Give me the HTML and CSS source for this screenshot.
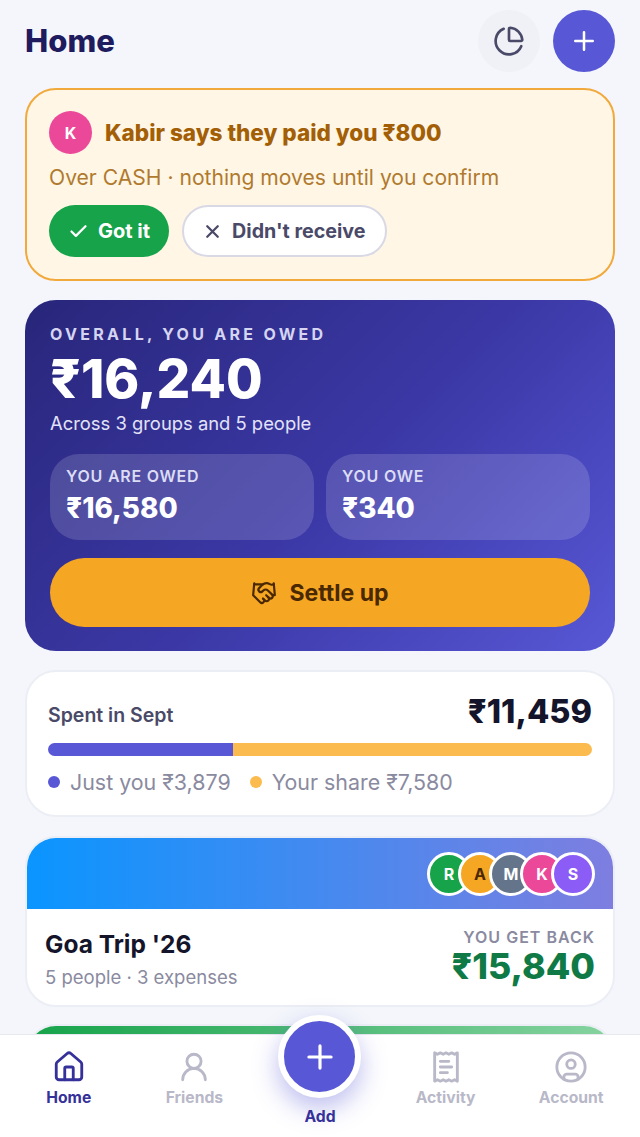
FILE: index.html
```html
<!DOCTYPE html>
<html lang="en">
<head>
    <meta charset="UTF-8">
    <meta name="viewport" content="width=device-width, initial-scale=1.0">
    <title>Home</title>
    <link rel="stylesheet" href="styles.css">
</head>
<body>
    <main class="page">
        <header class="top-bar">
            <h1>Home</h1>
            <div class="top-actions">
                <button class="round-button grey">
                    <svg width="32" height="32" viewBox="0 0 24 24" class="icon"><path d="M21 12c.552 0 1.005-.449.95-.998a10 10 0 0 0-8.953-8.951c-.55-.055-.998.398-.998.95v8a1 1 0 0 0 1 1z"/><path d="M21.21 15.89A10 10 0 1 1 8 2.83"/></svg>
                </button>
                <button class="round-button purple">
                    <svg width="30" height="30" viewBox="0 0 24 24" class="icon"><path d="M5 12h14M12 5v14"/></svg>
                </button>
            </div>
        </header>

        <section class="alert">
            <div class="alert-title">
                <span class="alert-avatar">K</span>
                <strong>Kabir says they paid you ₹800</strong>
            </div>
            <p class="alert-text">Over CASH · nothing moves until you confirm</p>
            <div class="alert-buttons">
                <button class="pill green">
                    <svg width="21" height="21" viewBox="0 0 24 24" class="icon"><path d="M20 6 9 17l-5-5"/></svg>
                    Got it
                </button>
                <button class="pill outline">
                    <svg width="21" height="21" viewBox="0 0 24 24" class="icon"><path d="M18 6 6 18M6 6l12 12"/></svg>
                    Didn't receive
                </button>
            </div>
        </section>

        <section class="hero">
            <div class="hero-label">OVERALL, YOU ARE OWED</div>
            <div class="hero-amount">₹16,240</div>
            <div class="hero-sub">Across 3 groups and 5 people</div>
            <div class="stats">
                <div class="stat">
                    <div class="stat-label">YOU ARE OWED</div>
                    <div class="stat-value">₹16,580</div>
                </div>
                <div class="stat">
                    <div class="stat-label">YOU OWE</div>
                    <div class="stat-value">₹340</div>
                </div>
            </div>
            <button class="settle-button">
                <svg width="26" height="26" viewBox="0 0 24 24" class="icon"><path d="m11 17 2 2a1 1 0 1 0 3-3"/><path d="m14 14 2.5 2.5a1 1 0 1 0 3-3l-3.88-3.88a3 3 0 0 0-4.24 0l-.88.88a1 1 0 1 1-3-3l2.81-2.81a5.79 5.79 0 0 1 7.06-.87l.47.28a2 2 0 0 0 1.42.25L21 4"/><path d="m21 3 1 11h-2"/><path d="M3 3 2 14l6.5 6.5a1 1 0 1 0 3-3"/><path d="M3 4h8"/></svg>
                Settle up
            </button>
        </section>

        <section class="card spent">
            <div class="spent-top">
                <span class="spent-label">Spent in Sept</span>
                <span class="spent-amount">₹11,459</span>
            </div>
            <div class="bar">
                <div class="bar-you"></div>
                <div class="bar-share"></div>
            </div>
            <div class="legend">
                <span class="legend-item"><i class="dot dot-you"></i>Just you ₹3,879</span>
                <span class="legend-item"><i class="dot dot-share"></i>Your share ₹7,580</span>
            </div>
        </section>

        <section class="card group">
            <div class="group-banner blue">
                <div class="avatars">
                    <span class="avatar green-bg">R</span>
                    <span class="avatar amber">A</span>
                    <span class="avatar slate">M</span>
                    <span class="avatar pink">K</span>
                    <span class="avatar violet">S</span>
                </div>
            </div>
            <div class="group-body">
                <div>
                    <div class="group-name">Goa Trip '26</div>
                    <div class="group-meta">5 people · 3 expenses</div>
                </div>
                <div class="group-balance">
                    <div class="balance-label">YOU GET BACK</div>
                    <div class="balance-value">₹15,840</div>
                </div>
            </div>
        </section>

        <section class="card group peek">
            <div class="group-banner green-banner"></div>
        </section>
    </main>

    <nav class="bottom-nav">
        <a class="nav-item active">
            <svg width="34" height="34" viewBox="0 0 24 24" class="icon"><path d="M15 21v-8a1 1 0 0 0-1-1h-4a1 1 0 0 0-1 1v8"/><path d="M3 10a2 2 0 0 1 .709-1.528l7-6a2 2 0 0 1 2.582 0l7 6A2 2 0 0 1 21 10v9a2 2 0 0 1-2 2H5a2 2 0 0 1-2-2z"/></svg>
            Home
        </a>
        <a class="nav-item">
            <svg width="34" height="34" viewBox="0 0 24 24" class="icon"><circle cx="12" cy="8" r="5"/><path d="M20 21a8 8 0 0 0-16 0"/></svg>
            Friends
        </a>
        <a class="nav-item add">
            <span class="add-circle">
                <svg width="38" height="38" viewBox="0 0 24 24" class="icon"><path d="M5 12h14M12 5v14"/></svg>
            </span>
            Add
        </a>
        <a class="nav-item">
            <svg width="34" height="34" viewBox="0 0 24 24" class="icon"><path d="M4 2v20l2-1 2 1 2-1 2 1 2-1 2 1 2-1 2 1V2l-2 1-2-1-2 1-2-1-2 1-2-1-2 1Z"/><path d="M14 8H8M16 12H8M13 16H8"/></svg>
            Activity
        </a>
        <a class="nav-item">
            <svg width="34" height="34" viewBox="0 0 24 24" class="icon"><circle cx="12" cy="12" r="10"/><circle cx="12" cy="10" r="3"/><path d="M7 20.662V19a2 2 0 0 1 2-2h6a2 2 0 0 1 2 2v1.662"/></svg>
            Account
        </a>
    </nav>
</body>
</html>
```

FILE: styles.css
```css
* {
    box-sizing: border-box;
}
html, body {
    margin: 0;
    height: 100%;
    overflow: hidden;
}
body {
    background-color: #f4f6fb;
    color: #14142b;
    font-family: Inter, "Noto Sans", sans-serif;
    position: relative;
}
button {
    font-family: inherit;
    border: none;
    cursor: pointer;
}
.icon {
    fill: none;
    stroke: currentColor;
    stroke-width: 2;
    stroke-linecap: round;
    stroke-linejoin: round;
    flex-shrink: 0;
}
.page {
    padding: 10px 25px 0;
    display: flex;
    flex-direction: column;
    gap: 19px;
}
.top-bar {
    display: flex;
    justify-content: space-between;
    align-items: center;
    margin-bottom: -3px;
}
.top-bar h1 {
    margin: 0 0 2px;
    font-size: 31px;
    font-weight: 800;
    color: #1e1b5e;
}
.top-actions {
    display: flex;
    gap: 13px;
}
.round-button {
    width: 62px;
    height: 62px;
    border-radius: 50%;
    display: flex;
    align-items: center;
    justify-content: center;
    padding: 0;
}
.round-button.grey {
    background: #eff1f6;
    color: #4a4a68;
}
.round-button.purple {
    background: #5858d6;
    color: white;
}
.alert {
    background: #fff6e6;
    border: 2px solid #f2a93b;
    border-radius: 31px;
    padding: 21px 22px 22px;
    height: 193px;
}
.alert-title {
    display: flex;
    align-items: center;
    gap: 13px;
}
.alert-title strong {
    font-size: 22.5px;
    font-weight: 800;
    color: #a35f06;
}
.alert-avatar {
    width: 43px;
    height: 43px;
    border-radius: 50%;
    background: #ec4899;
    color: white;
    display: flex;
    align-items: center;
    justify-content: center;
    font-size: 16px;
    font-weight: 700;
}
.alert-text {
    margin: 11px 0 14px;
    font-size: 21.1px;
    line-height: 26px;
    color: #b07a2e;
}
.alert-buttons {
    display: flex;
    gap: 13px;
}
.pill {
    height: 52px;
    border-radius: 26px;
    display: flex;
    align-items: center;
    gap: 9px;
    font-size: 20px;
    font-weight: 700;
    padding: 0 19px;
}
.pill .icon {
    stroke-width: 2.6;
}
.pill.green {
    background: #16a34a;
    color: white;
}
.pill.outline {
    background: white;
    color: #4a4a68;
    border: 2px solid #d9d9e6;
    padding: 0 19px 0 18px;
    font-size: 19.7px;
}
.hero {
    background: linear-gradient(135deg, #28267a 0%, #3c39a8 55%, #5858d6 100%);
    border-radius: 31px;
    height: 351px;
    padding: 25px;
    color: white;
}
.hero-label {
    font-size: 16px;
    line-height: 18px;
    font-weight: 700;
    letter-spacing: 3.3px;
    color: #d5d5f2;
}
.hero-amount {
    font-size: 53px;
    line-height: 60px;
    font-weight: 800;
    margin-top: 6px;
}
.hero-sub {
    font-size: 18.4px;
    line-height: 22px;
    margin-top: 3px;
    color: #e2e2f8;
}
.stats {
    display: grid;
    grid-template-columns: 1fr 1fr;
    gap: 12px;
    margin-top: 20px;
}
.stat {
    background: rgba(255, 255, 255, 0.15);
    border-radius: 29px;
    height: 86px;
    padding: 13px 16px;
}
.stat-label {
    font-size: 16px;
    line-height: 19px;
    font-weight: 600;
    letter-spacing: 0.75px;
    color: #dcdcf5;
}
.stat-value {
    font-size: 27.8px;
    line-height: 33px;
    font-weight: 800;
    margin-top: 6px;
}
.settle-button {
    width: 100%;
    height: 69px;
    margin-top: 18px;
    border-radius: 35px;
    background: #f5a623;
    color: #4a2800;
    font-size: 23px;
    font-weight: 700;
    display: flex;
    align-items: center;
    justify-content: center;
    gap: 12px;
}
.card {
    background: white;
    border: 2px solid #eceef5;
    border-radius: 31px;
}
.spent {
    height: 147px;
    padding: 22px 21px 20px;
}
.spent-top {
    display: flex;
    justify-content: space-between;
    align-items: center;
}
.spent-label {
    font-size: 19.5px;
    font-weight: 600;
    color: #4a4a68;
    margin-top: 5px;
}
.spent-amount {
    font-size: 32.5px;
    line-height: 36px;
    font-weight: 800;
}
.bar {
    display: flex;
    height: 13px;
    border-radius: 7px;
    overflow: hidden;
    margin-top: 13px;
}
.bar-you {
    width: 34%;
    background: #5858d6;
}
.bar-share {
    flex: 1;
    background: #fbbb4e;
}
.legend {
    display: flex;
    gap: 19px;
    margin-top: 13px;
    font-size: 21.4px;
    color: #8a8aa0;
}
.legend-item {
    display: flex;
    align-items: center;
    gap: 10px;
}
.dot {
    width: 12px;
    height: 12px;
    border-radius: 50%;
}
.dot-you {
    background: #5858d6;
}
.dot-share {
    background: #fbbb4e;
}
.group {
    overflow: hidden;
    height: 171px;
    flex-shrink: 0;
}
.group.peek {
    height: 100px;
    margin-top: -2px;
}
.group-banner {
    height: 71px;
    display: flex;
    align-items: center;
    justify-content: flex-end;
    padding-right: 18px;
}
.blue {
    background: linear-gradient(90deg, #0a95ff, #7e7ee0);
}
.green-banner {
    background: linear-gradient(90deg, #16a34a, #86d3a0);
}
.avatars {
    display: flex;
}
.avatar {
    width: 44px;
    height: 44px;
    border-radius: 50%;
    border: 3px solid white;
    display: flex;
    align-items: center;
    justify-content: center;
    font-size: 16px;
    font-weight: 700;
    color: white;
    flex-shrink: 0;
    margin-left: -13px;
}
.avatars .avatar:first-child {
    margin-left: 0;
}
.green-bg {
    background: #16a34a;
}
.amber {
    background: #f5a623;
    color: #4a2800;
}
.slate {
    background: #64748b;
}
.pink {
    background: #ec4899;
}
.violet {
    background: #8b5cf6;
}
.group-body {
    display: flex;
    justify-content: space-between;
    padding: 19px 18px 0;
}
.group-name {
    font-size: 24.5px;
    line-height: 32px;
    font-weight: 700;
}
.group-meta {
    font-size: 18.5px;
    line-height: 24px;
    margin-top: 5px;
    color: #8a8aa0;
}
.balance-label {
    font-size: 16px;
    line-height: 19px;
    font-weight: 600;
    letter-spacing: 1px;
    text-align: right;
    color: #8a8aa0;
}
.balance-value {
    font-size: 35.7px;
    line-height: 38px;
    font-weight: 800;
    color: #0f7a45;
}
.bottom-nav {
    position: absolute;
    left: 0;
    right: 0;
    bottom: 0;
    height: 103px;
    background: white;
    border-top: 1px solid #e8e8f0;
    display: grid;
    grid-template-columns: repeat(5, 1fr);
    padding: 15px 6px 0;
}
.nav-item {
    display: flex;
    flex-direction: column;
    align-items: center;
    font-size: 15.7px;
    font-weight: 700;
    line-height: 18px;
    gap: 5px;
    color: #b8b8c8;
}
.nav-item.active, .nav-item.add {
    color: #35309a;
}
.nav-item.add {
    margin-top: -35px;
    gap: 10px;
}
.add-circle {
    width: 83px;
    height: 83px;
    border-radius: 50%;
    background: #5858d6;
    border: 6px solid white;
    color: white;
    display: flex;
    align-items: center;
    justify-content: center;
    box-shadow: 0 10px 26px rgba(88, 88, 214, 0.4);
}
```
